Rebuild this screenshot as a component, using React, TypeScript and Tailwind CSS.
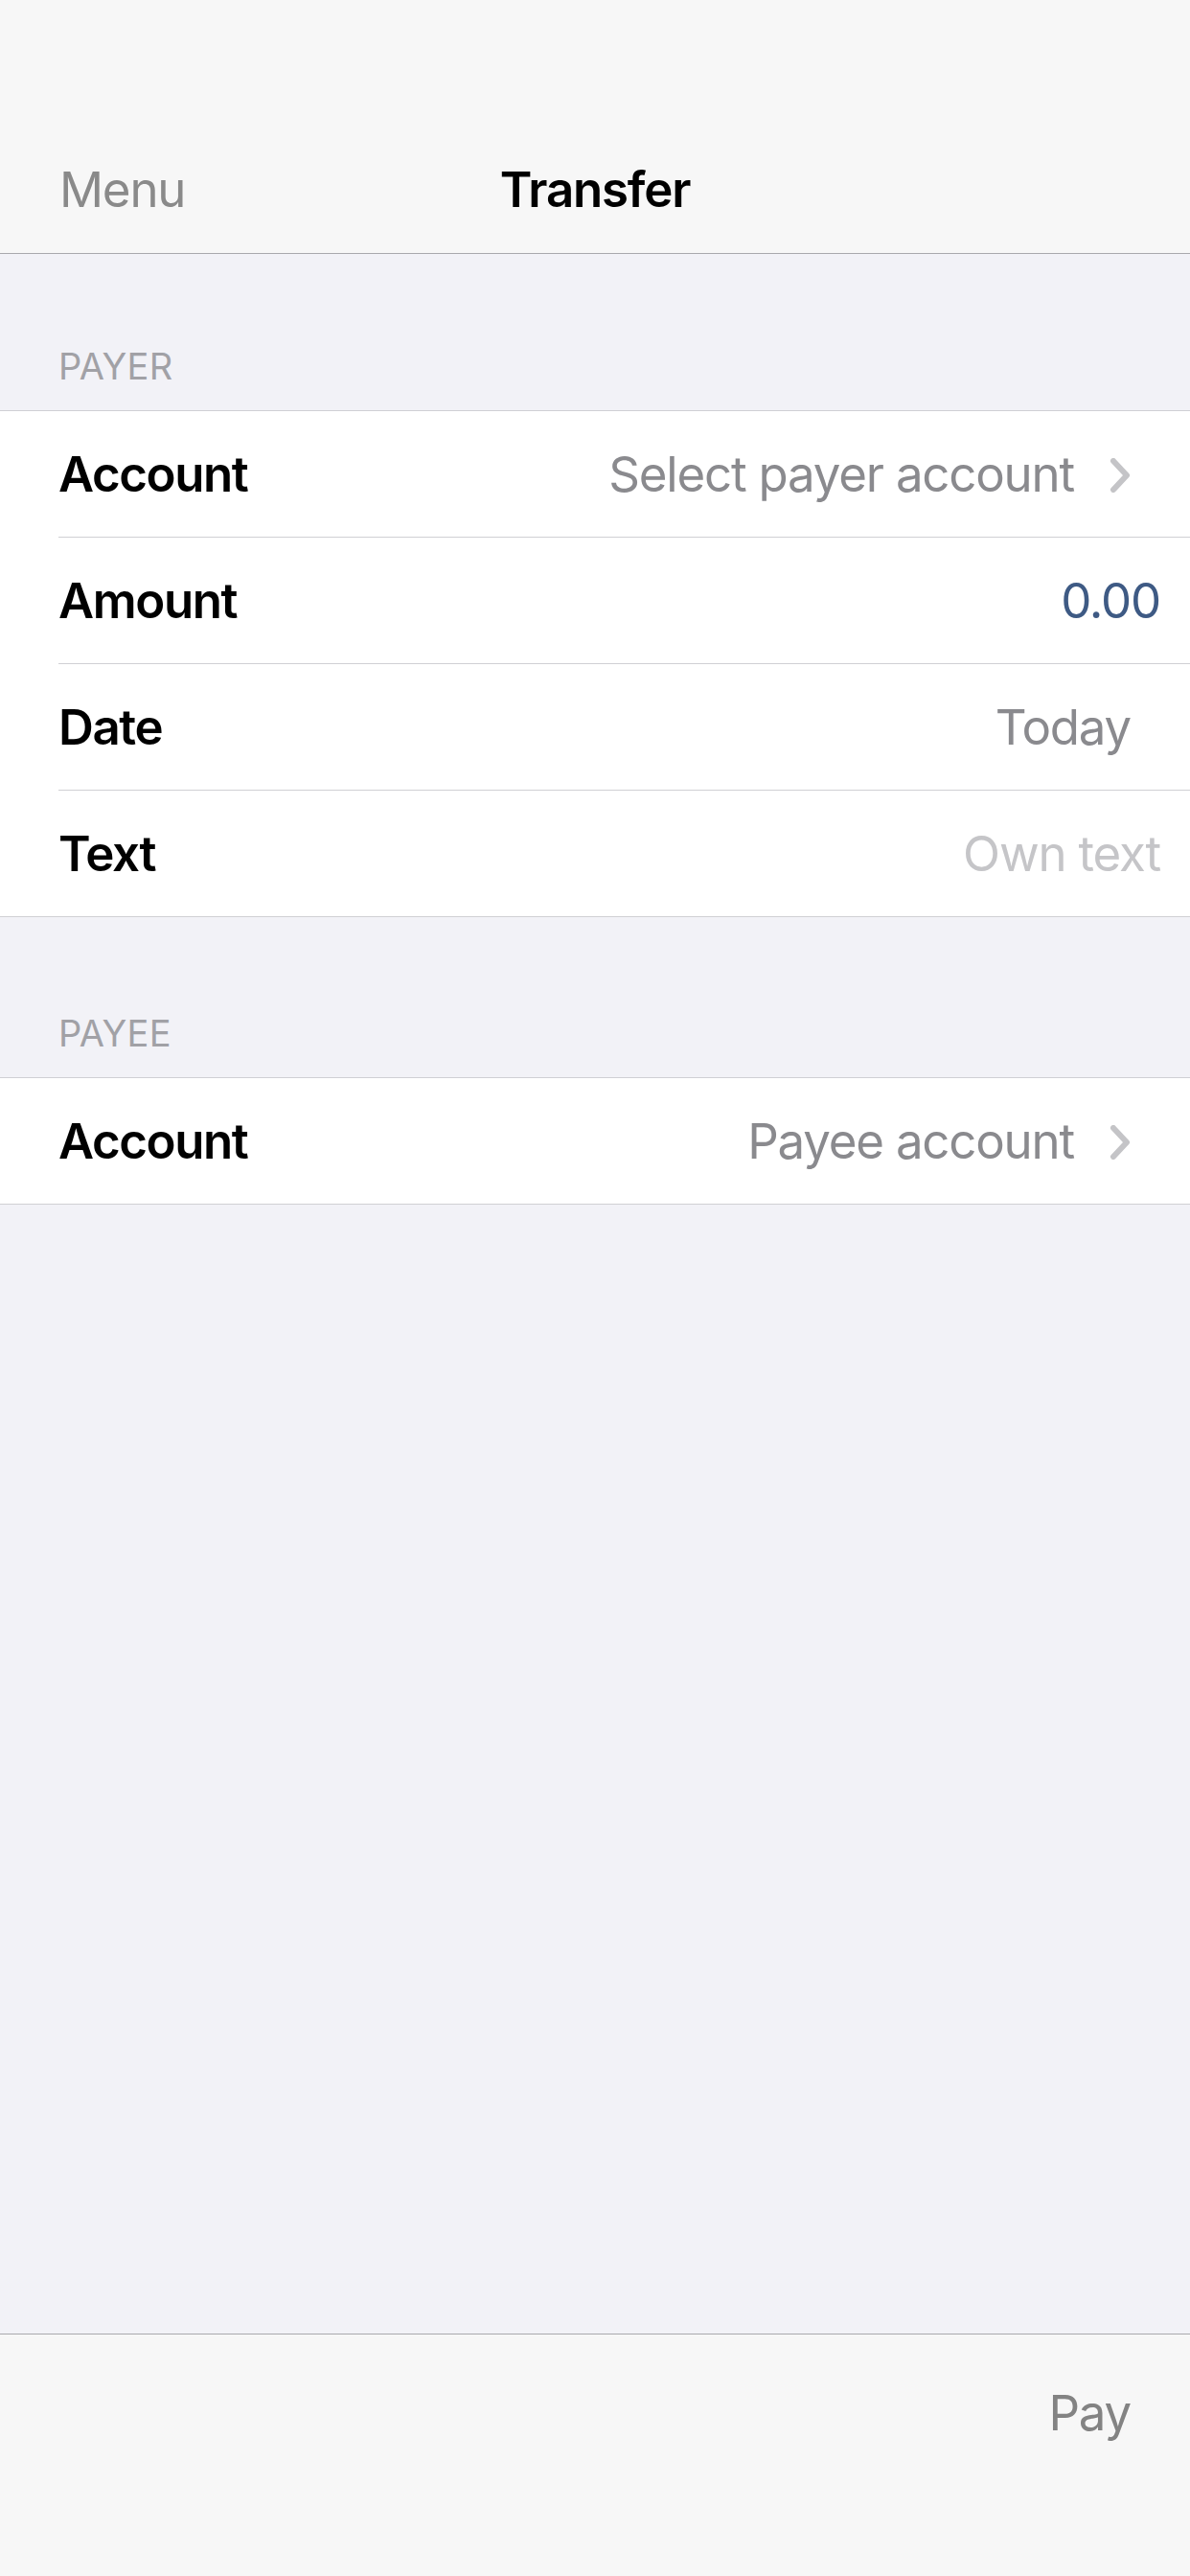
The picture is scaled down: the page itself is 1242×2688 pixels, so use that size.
import { ReactNode } from 'react'

// Simple iOS-style chevron used as disclosure indicator
function Chevron() {
  return (
    <svg width="22" height="36" viewBox="0 0 22 36" className="ml-[37px] shrink-0">
      <path d="M4 3 L18 18 L4 33" fill="none" stroke="#c4c4c7" strokeWidth="6" strokeLinecap="round" strokeLinejoin="round" />
    </svg>
  )
}

function SectionHeader({ title, top }: { title: string; top: string }) {
  return (
    <div className={`px-[61px] ${top} pb-[23px] text-[38px] leading-[46px] text-[#a1a1a6] tracking-[0.3px]`}>
      {title}
    </div>
  )
}

function Row({ label, children, last }: { label: string; children: ReactNode; last?: boolean }) {
  return (
    <div className="pl-[61px] bg-white">
      <div className={`flex items-center pt-[2px] ${last ? 'h-[131px]' : 'h-[132px] border-b border-[#d0d0d4]'}`}>
        <span className="text-[51px] font-semibold text-black tracking-[-1.4px]">{label}</span>
        <div className="flex-1 flex items-center justify-end">{children}</div>
      </div>
    </div>
  )
}

export default function App() {
  return (
    <div className="min-h-[2688px] flex flex-col bg-[#f2f2f7]" style={{ fontFamily: 'Inter, "Noto Sans", sans-serif' }}>
      {/* Navigation bar */}
      <header className="h-[265px] bg-[#f7f7f7] border-b border-[#a9a9ad] flex flex-col justify-end">
        <div className="h-[132px] relative flex items-center">
          <span className="pl-[62px] text-[51px] text-[#8a8a8a] tracking-[-1.2px]">Menu</span>
          <span className="absolute left-0 right-0 text-center text-[51px] font-semibold text-black tracking-[-1.2px] pointer-events-none">
            Transfer
          </span>
        </div>
      </header>

      {/* Payer */}
      <SectionHeader title="PAYER" top="pt-[94px]" />
      <div className="border-t border-b border-[#d0d0d4]">
        <Row label="Account">
          <span className="text-[51px] text-[#8a8a8e] tracking-[-1.2px]">Select payer account</span>
          <Chevron />
          <span className="w-[62px]" />
        </Row>
        <Row label="Amount">
          <span className="text-[51px] text-[#3e5a84] pr-[31px] tracking-[-1.2px]">0.00</span>
        </Row>
        <Row label="Date">
          <span className="text-[51px] text-[#8a8a8e] pr-[62px] tracking-[-1.2px]">Today</span>
        </Row>
        <Row label="Text" last>
          <span className="text-[51px] text-[#c5c5c8] pr-[31px] tracking-[-1.2px]">Own text</span>
        </Row>
      </div>

      {/* Payee */}
      <SectionHeader title="PAYEE" top="pt-[98px]" />
      <div className="border-t border-b border-[#d0d0d4]">
        <Row label="Account" last>
          <span className="text-[51px] text-[#8a8a8e] tracking-[-1.2px]">Payee account</span>
          <Chevron />
          <span className="w-[62px]" />
        </Row>
      </div>

      <div className="flex-1" />

      {/* Bottom toolbar */}
      <footer className="h-[253px] bg-[#f7f7f7] border-t border-[#a9a9ad]">
        <div className="h-[164px] flex items-center justify-end pr-[62px]">
          <span className="text-[51px] text-[#838383] tracking-[-1.2px]">Pay</span>
        </div>
      </footer>
    </div>
  )
}
